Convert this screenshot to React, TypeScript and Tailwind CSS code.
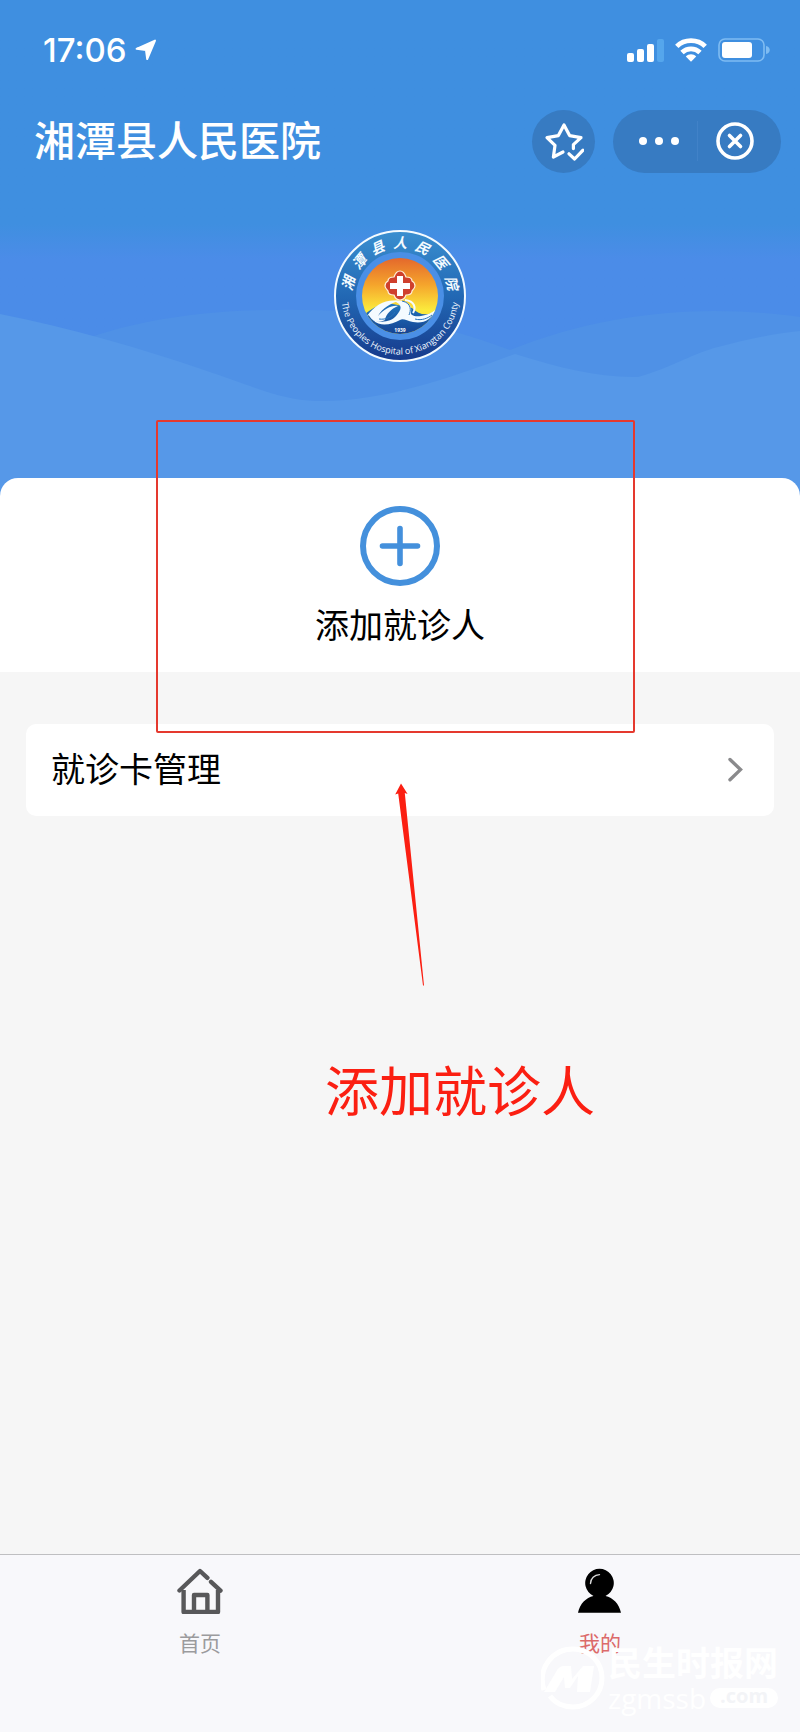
import React from 'react';

interface TabItem {
    id: string;
    label: string;
    icon: React.ReactNode;
    labelClass: string;
}

const sealChars = [
    { char: '湘', angle: -76 },
    { char: '潭', angle: -50 },
    { char: '县', angle: -25 },
    { char: '人', angle: 0 },
    { char: '民', angle: 25 },
    { char: '医', angle: 50 },
    { char: '院', angle: 76 },
];

function HospitalSeal() {
    return (
        <svg viewBox="0 0 132 132" className="w-[132px] h-[132px]" role="img" aria-label="湘潭县人民医院">
            <defs>
                <linearGradient id="sealRing" x1="0" y1="0" x2="0" y2="1">
                    <stop offset="0" stopColor="#3a8fd0" />
                    <stop offset="0.5" stopColor="#2268b4" />
                    <stop offset="1" stopColor="#163a8c" />
                </linearGradient>
                <linearGradient id="sealSky" x1="0" y1="0" x2="0" y2="1">
                    <stop offset="0" stopColor="#e4682c" />
                    <stop offset="0.35" stopColor="#f5a42c" />
                    <stop offset="0.68" stopColor="#fbe93c" />
                </linearGradient>
                <linearGradient id="sealSea" x1="0" y1="0" x2="0" y2="1">
                    <stop offset="0" stopColor="#2277bd" />
                    <stop offset="1" stopColor="#143f90" />
                </linearGradient>
                <clipPath id="sealInner">
                    <circle cx="66" cy="66" r="38" />
                </clipPath>
                <path id="sealArc" d="M 7.5 66 A 58.5 58.5 0 0 0 124.5 66" />
            </defs>
            <circle cx="66" cy="66" r="65" fill="url(#sealRing)" stroke="#f4fbff" strokeWidth="2" />
            <circle cx="66" cy="66" r="44" fill="#4a8fe6" />
            <g clipPath="url(#sealInner)">
                <rect x="28" y="28" width="76" height="76" fill="url(#sealSky)" />
                <path d="M26 88 C34 82 42 74 54 73 L78 78 C86 86 94 86 106 80 V106 H26 Z" fill="url(#sealSea)" />
            </g>
            {/* Waves */}
            <path
                d="M33 86 C41 75 52 69 64 71 C58 73 48 78 44 86 C50 79 58 75 64 76 C57 79 52 84 51 90 C45 93 39 92 36 87 C35 85 34 85 33 86 Z"
                fill="#f4fbff"
            />
            <path
                d="M60 71 C70 69 79 74 77 82 C76 85 80 87 87 86 C93 85 98 83 101 80 C98 90 89 94 79 92 C73 91 69 88 66 90 C58 94 47 98 39 90 C47 93 57 92 62 86 C68 79 69 75 60 71 Z"
                fill="#f4fbff"
            />
            <path d="M68 71 C78 73 77 81 75 85 M81 89 C88 91 94 88 98 85 M45 89 C52 90 58 87 61 82" fill="none" stroke="#2574bd" strokeWidth="1" />
            <path d="M71 70 C81 71 82 78 79 83" fill="none" stroke="#f4fbff" strokeWidth="2" />
            {/* Medical cross */}
            <path
                d="M66 41 C69 41 71 44 72 47 C76 47 78 49 78 51 C80 52 81 54 81 56 C81 58 80 59 78 61 C78 64 75 65 72 65 C71 68 69 70 66 70 C63 70 61 68 60 65 C57 65 54 64 54 61 C52 59 51 58 51 56 C51 54 52 52 54 51 C54 49 56 47 60 47 C61 44 63 41 66 41 Z"
                fill="#cf402d"
                stroke="#fff0d8"
                strokeWidth="1.2"
            />
            <path d="M66 46 V66 M56 56 H76" stroke="#fff" strokeWidth="6" />
            <g fill="#f4fbff" className="font-['Noto_Sans_CJK_SC',sans-serif] font-bold italic" fontSize="14" textAnchor="middle">
                {sealChars.map((item) => (
                    <text key={item.char} x="66" y="18" transform={`rotate(${item.angle} 66 66)`}>
                        {item.char}
                    </text>
                ))}
            </g>
            <text fill="#f1f8ff" className="font-['Open_Sans',sans-serif] font-medium" fontSize="9">
                <textPath href="#sealArc" startOffset="50%" textAnchor="middle">
                    The Peoples Hospital of Xiangtan County
                </textPath>
            </text>
            <text x="66" y="102" fill="#fff" className="font-['Open_Sans',sans-serif] font-bold" fontSize="5" textAnchor="middle">
                1939
            </text>
        </svg>
    );
}

function StatusBar() {
    return (
        <div className="h-24 pl-[43px] pr-[30px] flex items-center justify-between text-white">
            <div className="flex items-center gap-2 pt-1">
                <span className="font-['Inter',sans-serif] font-medium text-[33px] leading-10">17:06</span>
                <svg viewBox="0 0 22 22" className="w-[22px] h-[22px]" fill="currentColor" stroke="currentColor" strokeWidth="2" strokeLinejoin="round">
                    <path d="M20 1.6 L12.2 20 L11 11 L1.6 9.8 Z" />
                </svg>
            </div>
            <div className="flex items-center gap-[11px] pt-1">
                <svg viewBox="0 0 37 24" className="w-[37px] h-6" fill="currentColor">
                    <rect x="0" y="15" width="7" height="9" rx="2" />
                    <rect x="10" y="11" width="7" height="13" rx="2" />
                    <rect x="20" y="6" width="7" height="18" rx="2" />
                    <rect x="30" y="1" width="7" height="23" rx="2" fill="#55a6ec" />
                </svg>
                <svg viewBox="0 0 32 24" className="w-8 h-6" fill="none" stroke="currentColor" strokeWidth="4.8">
                    <path d="M1.8 8.4 C9.4 .8 22.6 .8 30.2 8.4" />
                    <path d="M7 14.4 C12 9.6 20 9.6 25 14.4" />
                    <path d="M10.8 18.4 C13.6 15.6 18.4 15.6 21.2 18.4 L16 23.8 Z" fill="currentColor" stroke="none" />
                </svg>
                <svg viewBox="0 0 52 24" className="w-[52px] h-6">
                    <rect x="1" y="1" width="45" height="22" rx="6" fill="none" stroke="#7fbcf2" strokeWidth="1.6" />
                    <rect x="4" y="4" width="30" height="16" rx="3" fill="#fff" />
                    <path d="M48 8 C53 9 53 15 48 16 Z" fill="#7fbcf2" />
                </svg>
            </div>
        </div>
    );
}

function TitleBar() {
    return (
        <div className="h-[90px] pl-[34px] pr-[19px] flex items-center justify-between text-white">
            <h1 className="pt-0.5 text-[41px] leading-[60px] font-medium">湘潭县人民医院</h1>
            <div className="flex items-center gap-[18px]">
                <button type="button" aria-label="收藏" className="w-[63px] h-[63px] rounded-full bg-[#377bc2] flex items-center justify-center">
                    <svg viewBox="0 0 40 40" className="w-10 h-10" fill="none" stroke="currentColor" strokeWidth="3.2" strokeLinecap="round" strokeLinejoin="round">
                        <path d="M19 31 L9.4 36 L11 24.4 L3 16.6 L14.4 14.6 L20 4 L25.6 14.6 L37 16.6 L29.4 23.6 L29.4 27.6" />
                        <path d="M25 32.8 L30.6 38 L39 29.2" />
                    </svg>
                </button>
                <div className="h-[63px] w-[168px] rounded-full bg-[#377bc2] flex items-center">
                    <button type="button" aria-label="更多" className="flex-1 h-full flex items-center justify-center gap-2 pl-2">
                        <span className="w-2 h-2 rounded-full bg-white" />
                        <span className="w-2 h-2 rounded-full bg-white" />
                        <span className="w-2 h-2 rounded-full bg-white" />
                    </button>
                    <span className="w-px h-10 bg-[#4182c8]" />
                    <button type="button" aria-label="关闭" className="flex-1 h-full flex items-center justify-center pr-2">
                        <svg viewBox="0 0 38 38" className="w-[38px] h-[38px]" fill="none" stroke="currentColor" strokeWidth="3.6" strokeLinecap="round">
                            <circle cx="19" cy="19" r="17" />
                            <path d="M13.5 13.5 L24.5 24.5 M24.5 13.5 L13.5 24.5" />
                        </svg>
                    </button>
                </div>
            </div>
        </div>
    );
}

function HomeIcon() {
    return (
        <svg viewBox="0 0 46 46" className="w-[46px] h-[46px]" fill="none" stroke="#58585a" strokeWidth="4.4" strokeLinejoin="round">
            <path d="M2.5 22.5 L23 3 L30.4 9.8" strokeLinecap="round" />
            <path d="M34 13.8 L43.5 22.6" strokeLinecap="round" />
            <path d="M6.6 22 V44 H41 V22" />
            <path d="M17 43 V27 H30.4 V43" />
        </svg>
    );
}

function UserIcon() {
    return (
        <svg viewBox="0 0 46 46" className="w-[46px] h-[46px]">
            <path d="M1 44.8 C3 35.5 9 29.8 16.5 28 A14.3 14.3 0 1 1 28.5 28 C36 29.8 42 35.5 44 44.8 Z" fill="#000" />
            <path d="M13.5 15.5 C13.5 10.5 17.5 6.8 22.5 6.6" fill="none" stroke="#d8d8d8" strokeWidth="1.4" strokeLinecap="round" />
        </svg>
    );
}

const tabs: TabItem[] = [
    { id: 'home', label: '首页', icon: <HomeIcon />, labelClass: 'text-[#9b9b9d]' },
    { id: 'mine', label: '我的', icon: <UserIcon />, labelClass: 'text-[#dc6a6a]' },
];

function Watermark() {
    return (
        <div className="absolute right-[22px] bottom-5 flex items-center gap-[3px] text-white pointer-events-none">
            <svg viewBox="0 0 64 64" className="w-16 h-16" fill="none" stroke="currentColor">
                <path d="M3 44 C-4 22 12 3 32 3 C48 3 61 16 61 32 C61 48 48 61 32 61 C23 61 14 57 9 50" strokeWidth="5" />
                <path d="M3 46 H14 L23 31 L24 42 H29 L37 30 L36 46 H49 L53 20 H42 L31 33 L30 20 H22 Q17 21 15 26 Z" fill="currentColor" stroke="none" />
            </svg>
            <div className="flex flex-col">
                <span className="text-[34px] leading-10 font-bold">民生时报网</span>
                <span className="flex items-center gap-1">
                    <span className="font-['Open_Sans',sans-serif] text-[28px] leading-7">zgmssb</span>
                    <span className="flex-1 h-5 rounded-full bg-white text-[#f3f4f7] text-center font-['Open_Sans',sans-serif] font-bold text-[20px] leading-4">.com</span>
                </span>
            </div>
        </div>
    );
}

export default function App() {
    return (
        <div className="relative min-h-screen flex flex-col bg-[#f6f6f6] font-['Liberation_Sans','Noto_Sans_CJK_SC',sans-serif]">
            <header className="relative pb-[136px] bg-linear-to-b from-[#3f8fe0] from-45% via-[#4b8ce8] via-52% to-[#4b8ce8]">
                <svg viewBox="0 0 800 198" preserveAspectRatio="none" className="absolute inset-x-0 bottom-0 w-full h-[198px]">
                    <path
                        d="M60 50 C110 25 190 10 275 10 C360 8 430 20 510 50 C580 22 650 11 714 11 C750 11 780 14 800 17 V198 H60 Z"
                        fill="#4f91e6"
                    />
                    <path
                        d="M0 14 C70 28 140 48 204 70 C250 85 280 100 316 101 C380 103 450 78 515 54 C560 68 600 78 638 77 C670 68 690 55 714 48 C745 40 775 33 800 31 V198 H0 Z"
                        fill="#5698e8"
                    />
                </svg>
                <div className="relative">
                    <StatusBar />
                    <TitleBar />
                    <div className="pt-11 flex justify-center">
                        <HospitalSeal />
                    </div>
                </div>
            </header>

            <main className="relative flex-1">
                <section className="-mt-5 bg-white rounded-t-[18px] flex justify-center">
                    <button type="button" className="pt-7 pb-[22px] flex flex-col items-center gap-4">
                        <svg viewBox="0 0 80 80" className="w-20 h-20" fill="none" stroke="#4490dc" strokeLinecap="round">
                            <circle cx="40" cy="40" r="37" strokeWidth="6" />
                            <path d="M40 22.5 V57.5 M22.5 40 H57.5" strokeWidth="5.6" />
                        </svg>
                        <span className="text-[34px] leading-[48px] text-black">添加就诊人</span>
                    </button>
                </section>

                <button type="button" className="mt-[52px] mx-[26px] h-[92px] w-[calc(100%-52px)] px-[25px] flex items-center justify-between bg-white rounded-[10px]">
                    <span className="text-[34px] leading-[48px] text-black">就诊卡管理</span>
                    <svg viewBox="0 0 24 26" className="w-6 h-[26px]" fill="none" stroke="#8a8a8c" strokeWidth="3.4" strokeLinecap="round">
                        <path d="M5 2.5 L15.5 12.6 L5 22.8" />
                    </svg>
                </button>
            </main>

            <nav className="h-[178px] border-t border-[#bfbfc1] bg-[#f8f8fb] grid grid-cols-2">
                {tabs.map((tab) => (
                    <button key={tab.id} type="button" className="pt-[13px] flex flex-col items-center gap-4">
                        {tab.icon}
                        <span className={`text-[21px] leading-7 ${tab.labelClass}`}>{tab.label}</span>
                    </button>
                ))}
            </nav>

            {/* Guide overlay */}
            <div className="absolute left-[156px] top-[420px] w-[479px] h-[313px] border-2 border-[#e5392e] rounded-xs pointer-events-none" />
            <svg viewBox="0 0 32 204" className="absolute left-[394px] top-[783px] w-8 h-[204px] pointer-events-none" fill="#fb1f12">
                <path d="M7 .5 L13.6 11 L10.8 10 L30 202.5 H29 L4.2 10.5 L1.2 11.5 Z" />
            </svg>
            <p className="absolute left-[325px] top-[1053px] text-[54px] leading-[80px] text-[#fb1f12] whitespace-nowrap">添加就诊人</p>
            <Watermark />
        </div>
    );
}
